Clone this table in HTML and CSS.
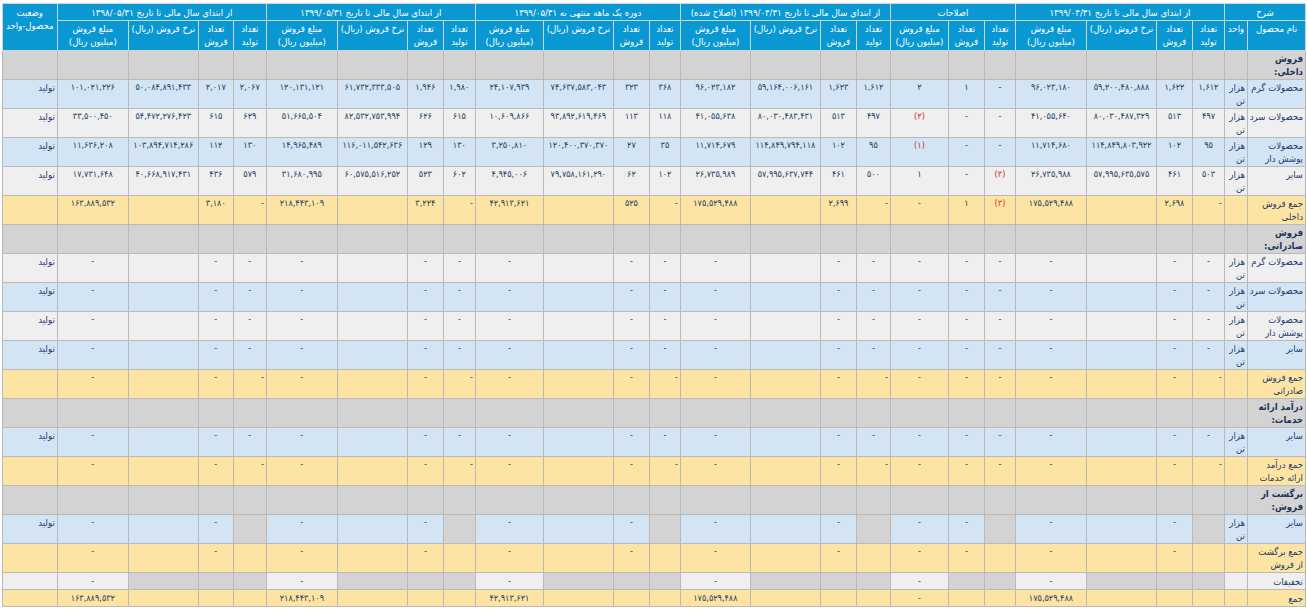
FILE: index.html
```html
<!DOCTYPE html>
<html lang="fa" dir="rtl">
<head>
<meta charset="utf-8">
<title>گزارش فعالیت ماهانه</title>
<link rel="stylesheet" href="styles.css">
</head>
<body>
<table class="rep">
<colgroup>
<col class="w58"><col class="w23">
<col class="w32"><col class="w36"><col class="w70"><col class="w71">
<col class="w31"><col class="w36"><col class="w58">
<col class="w34"><col class="w36"><col class="w70"><col class="w70">
<col class="w31"><col class="w36"><col class="w70"><col class="w68">
<col class="w32"><col class="w36"><col class="w70"><col class="w71">
<col class="w33"><col class="w35"><col class="w70"><col class="w71">
<col class="w55">
</colgroup>
<thead>
<tr class="h1">
<th colspan="2">شرح</th>
<th colspan="4">از ابتدای سال مالی تا تاریخ ۱۳۹۹/۰۴/۳۱</th>
<th colspan="3">اصلاحات</th>
<th colspan="4">از ابتدای سال مالی تا تاریخ ۱۳۹۹/۰۴/۳۱ (اصلاح شده)</th>
<th colspan="4">دوره یک ماهه منتهی به ۱۳۹۹/۰۵/۳۱</th>
<th colspan="4">از ابتدای سال مالی تا تاریخ ۱۳۹۹/۰۵/۳۱</th>
<th colspan="4">از ابتدای سال مالی تا تاریخ ۱۳۹۸/۰۵/۳۱</th>
<th rowspan="2" class="top">وضعیت<br>محصول-واحد</th>
</tr>
<tr class="h2">
<th>نام محصول</th><th>واحد</th>
<th>تعداد<br>تولید</th><th>تعداد<br>فروش</th><th>نرخ فروش (ریال)</th><th>مبلغ فروش<br>(میلیون ریال)</th>
<th>تعداد<br>تولید</th><th>تعداد<br>فروش</th><th>مبلغ فروش<br>(میلیون ریال)</th>
<th>تعداد<br>تولید</th><th>تعداد<br>فروش</th><th>نرخ فروش (ریال)</th><th>مبلغ فروش<br>(میلیون ریال)</th>
<th>تعداد<br>تولید</th><th>تعداد<br>فروش</th><th>نرخ فروش (ریال)</th><th>مبلغ فروش<br>(میلیون ریال)</th>
<th>تعداد<br>تولید</th><th>تعداد<br>فروش</th><th>نرخ فروش (ریال)</th><th>مبلغ فروش<br>(میلیون ریال)</th>
<th>تعداد<br>تولید</th><th>تعداد<br>فروش</th><th>نرخ فروش (ریال)</th><th>مبلغ فروش<br>(میلیون ریال)</th>
</tr>
</thead>
<tbody>
<tr class="sec"><td class="nm">فروش<br>داخلی:</td><td></td><td></td><td></td><td></td><td></td><td></td><td></td><td></td><td></td><td></td><td></td><td></td><td></td><td></td><td></td><td></td><td></td><td></td><td></td><td></td><td></td><td></td><td></td><td></td><td></td></tr>

<tr class="bl"><td class="nm">محصولات گرم</td><td class="un">هزار<br>تن</td>
<td>۱,۶۱۲</td><td>۱,۶۲۲</td><td>۵۹,۲۰۰,۴۸۰,۸۸۸</td><td>۹۶,۰۲۳,۱۸۰</td>
<td>-</td><td>۱</td><td>۲</td>
<td>۱,۶۱۲</td><td>۱,۶۲۳</td><td>۵۹,۱۶۴,۰۰۶,۱۶۱</td><td>۹۶,۰۲۳,۱۸۲</td>
<td>۳۶۸</td><td>۳۲۳</td><td>۷۴,۶۳۷,۵۸۳,۰۴۳</td><td>۲۴,۱۰۷,۹۳۹</td>
<td>۱,۹۸۰</td><td>۱,۹۴۶</td><td>۶۱,۷۳۲,۳۳۳,۵۰۵</td><td>۱۲۰,۱۳۱,۱۲۱</td>
<td>۲,۰۶۷</td><td>۲,۰۱۷</td><td>۵۰,۰۸۴,۸۹۱,۴۳۳</td><td>۱۰۱,۰۲۱,۲۲۶</td>
<td class="st">تولید</td></tr>

<tr class="lt"><td class="nm">محصولات سرد</td><td class="un">هزار<br>تن</td>
<td>۴۹۷</td><td>۵۱۳</td><td>۸۰,۰۳۰,۴۸۷,۳۲۹</td><td>۴۱,۰۵۵,۶۴۰</td>
<td>-</td><td>-</td><td class="neg">(۲)</td>
<td>۴۹۷</td><td>۵۱۳</td><td>۸۰,۰۳۰,۴۸۳,۴۳۱</td><td>۴۱,۰۵۵,۶۳۸</td>
<td>۱۱۸</td><td>۱۱۳</td><td>۹۳,۸۹۲,۶۱۹,۴۶۹</td><td>۱۰,۶۰۹,۸۶۶</td>
<td>۶۱۵</td><td>۶۲۶</td><td>۸۲,۵۳۲,۷۵۳,۹۹۴</td><td>۵۱,۶۶۵,۵۰۴</td>
<td>۶۲۹</td><td>۶۱۵</td><td>۵۴,۴۷۲,۲۷۶,۴۲۳</td><td>۳۳,۵۰۰,۴۵۰</td>
<td class="st">تولید</td></tr>

<tr class="bl"><td class="nm">محصولات<br>پوشش دار</td><td class="un">هزار<br>تن</td>
<td>۹۵</td><td>۱۰۲</td><td>۱۱۴,۸۴۹,۸۰۳,۹۲۲</td><td>۱۱,۷۱۴,۶۸۰</td>
<td>-</td><td>-</td><td class="neg">(۱)</td>
<td>۹۵</td><td>۱۰۲</td><td>۱۱۴,۸۴۹,۷۹۴,۱۱۸</td><td>۱۱,۷۱۴,۶۷۹</td>
<td>۳۵</td><td>۲۷</td><td>۱۲۰,۴۰۰,۳۷۰,۳۷۰</td><td>۳,۲۵۰,۸۱۰</td>
<td>۱۳۰</td><td>۱۲۹</td><td>۱۱۶,۰۱۱,۵۴۲,۶۳۶</td><td>۱۴,۹۶۵,۴۸۹</td>
<td>۱۳۰</td><td>۱۱۲</td><td>۱۰۳,۸۹۴,۷۱۴,۲۸۶</td><td>۱۱,۶۳۶,۲۰۸</td>
<td class="st">تولید</td></tr>

<tr class="lt"><td class="nm">سایر</td><td class="un">هزار<br>تن</td>
<td>۵۰۳</td><td>۴۶۱</td><td>۵۷,۹۹۵,۶۳۵,۵۷۵</td><td>۲۶,۷۳۵,۹۸۸</td>
<td class="neg">(۳)</td><td>-</td><td>۱</td>
<td>۵۰۰</td><td>۴۶۱</td><td>۵۷,۹۹۵,۶۳۷,۷۴۴</td><td>۲۶,۷۳۵,۹۸۹</td>
<td>۱۰۲</td><td>۶۲</td><td>۷۹,۷۵۸,۱۶۱,۲۹۰</td><td>۴,۹۴۵,۰۰۶</td>
<td>۶۰۲</td><td>۵۲۳</td><td>۶۰,۵۷۵,۵۱۶,۲۵۲</td><td>۳۱,۶۸۰,۹۹۵</td>
<td>۵۷۹</td><td>۴۳۶</td><td>۴۰,۶۶۸,۹۱۷,۴۳۱</td><td>۱۷,۷۳۱,۶۴۸</td>
<td class="st">تولید</td></tr>

<tr class="ye"><td class="nm">جمع فروش<br>داخلی</td><td></td>
<td class="ra">-</td><td>۲,۶۹۸</td><td></td><td>۱۷۵,۵۲۹,۴۸۸</td>
<td class="neg">(۳)</td><td>۱</td><td>-</td>
<td class="ra">-</td><td>۲,۶۹۹</td><td></td><td>۱۷۵,۵۲۹,۴۸۸</td>
<td class="ra">-</td><td>۵۲۵</td><td></td><td>۴۲,۹۱۳,۶۲۱</td>
<td class="ra">-</td><td>۳,۲۲۴</td><td></td><td>۲۱۸,۴۴۳,۱۰۹</td>
<td class="ra">-</td><td>۳,۱۸۰</td><td></td><td>۱۶۳,۸۸۹,۵۳۲</td>
<td></td></tr>

<tr class="sec"><td class="nm">فروش<br>صادراتی:</td><td></td><td></td><td></td><td></td><td></td><td></td><td></td><td></td><td></td><td></td><td></td><td></td><td></td><td></td><td></td><td></td><td></td><td></td><td></td><td></td><td></td><td></td><td></td><td></td><td></td></tr>

<tr class="lt"><td class="nm">محصولات گرم</td><td class="un">هزار<br>تن</td>
<td>-</td><td>-</td><td></td><td>-</td><td>-</td><td>-</td><td>-</td>
<td>-</td><td>-</td><td></td><td>-</td><td>-</td><td>-</td><td></td><td>-</td>
<td>-</td><td>-</td><td></td><td>-</td><td>-</td><td>-</td><td></td><td>-</td>
<td class="st">تولید</td></tr>

<tr class="bl"><td class="nm">محصولات سرد</td><td class="un">هزار<br>تن</td>
<td>-</td><td>-</td><td></td><td>-</td><td>-</td><td>-</td><td>-</td>
<td>-</td><td>-</td><td></td><td>-</td><td>-</td><td>-</td><td></td><td>-</td>
<td>-</td><td>-</td><td></td><td>-</td><td>-</td><td>-</td><td></td><td>-</td>
<td class="st">تولید</td></tr>

<tr class="lt"><td class="nm">محصولات<br>پوشش دار</td><td class="un">هزار<br>تن</td>
<td>-</td><td>-</td><td></td><td>-</td><td>-</td><td>-</td><td>-</td>
<td>-</td><td>-</td><td></td><td>-</td><td>-</td><td>-</td><td></td><td>-</td>
<td>-</td><td>-</td><td></td><td>-</td><td>-</td><td>-</td><td></td><td>-</td>
<td class="st">تولید</td></tr>

<tr class="bl"><td class="nm">سایر</td><td class="un">هزار<br>تن</td>
<td>-</td><td>-</td><td></td><td>-</td><td>-</td><td>-</td><td>-</td>
<td>-</td><td>-</td><td></td><td>-</td><td>-</td><td>-</td><td></td><td>-</td>
<td>-</td><td>-</td><td></td><td>-</td><td>-</td><td>-</td><td></td><td>-</td>
<td class="st">تولید</td></tr>

<tr class="ye"><td class="nm">جمع فروش<br>صادراتی</td><td></td>
<td class="ra">-</td><td>-</td><td></td><td>-</td><td>-</td><td>-</td><td>-</td>
<td class="ra">-</td><td>-</td><td></td><td>-</td><td class="ra">-</td><td>-</td><td></td><td>-</td>
<td class="ra">-</td><td>-</td><td></td><td>-</td><td class="ra">-</td><td>-</td><td></td><td>-</td>
<td></td></tr>

<tr class="sec"><td class="nm">درآمد ارائه<br>خدمات:</td><td></td><td></td><td></td><td></td><td></td><td></td><td></td><td></td><td></td><td></td><td></td><td></td><td></td><td></td><td></td><td></td><td></td><td></td><td></td><td></td><td></td><td></td><td></td><td></td><td></td></tr>

<tr class="bl"><td class="nm">سایر</td><td class="un">هزار<br>تن</td>
<td>-</td><td>-</td><td></td><td>-</td><td>-</td><td>-</td><td>-</td>
<td>-</td><td>-</td><td></td><td>-</td><td>-</td><td>-</td><td></td><td>-</td>
<td>-</td><td>-</td><td></td><td>-</td><td>-</td><td>-</td><td></td><td>-</td>
<td class="st">تولید</td></tr>

<tr class="ye"><td class="nm">جمع درآمد<br>ارائه خدمات</td><td></td>
<td class="ra">-</td><td>-</td><td></td><td>-</td><td>-</td><td>-</td><td>-</td>
<td class="ra">-</td><td>-</td><td></td><td>-</td><td class="ra">-</td><td>-</td><td></td><td>-</td>
<td class="ra">-</td><td>-</td><td></td><td>-</td><td class="ra">-</td><td>-</td><td></td><td>-</td>
<td></td></tr>

<tr class="sec"><td class="nm">برگشت از<br>فروش:</td><td></td><td></td><td></td><td></td><td></td><td></td><td></td><td></td><td></td><td></td><td></td><td></td><td></td><td></td><td></td><td></td><td></td><td></td><td></td><td></td><td></td><td></td><td></td><td></td><td></td></tr>

<tr class="bl"><td class="nm">سایر</td><td class="un">هزار<br>تن</td>
<td class="gr"></td><td>-</td><td></td><td>-</td><td class="gr"></td><td>-</td><td>-</td>
<td class="gr"></td><td>-</td><td></td><td>-</td><td class="gr"></td><td>-</td><td></td><td>-</td>
<td class="gr"></td><td>-</td><td></td><td>-</td><td class="gr"></td><td>-</td><td></td><td>-</td>
<td class="st">تولید</td></tr>

<tr class="ye"><td class="nm">جمع برگشت<br>از فروش</td><td></td>
<td></td><td>-</td><td></td><td>-</td><td></td><td>-</td><td>-</td>
<td></td><td>-</td><td></td><td>-</td><td></td><td>-</td><td></td><td>-</td>
<td></td><td>-</td><td></td><td>-</td><td></td><td>-</td><td></td><td>-</td>
<td></td></tr>

<tr class="gy one"><td class="nm li">تخفیفات</td><td class="li"></td>
<td></td><td></td><td></td><td class="li">-</td><td></td><td></td><td class="li">-</td>
<td></td><td></td><td></td><td class="li">-</td><td></td><td></td><td></td><td class="li">-</td>
<td></td><td></td><td></td><td class="li">-</td><td></td><td></td><td></td><td class="li">-</td>
<td class="li"></td></tr>

<tr class="ye one"><td class="nm">جمع</td><td></td>
<td></td><td></td><td></td><td>۱۷۵,۵۲۹,۴۸۸</td><td></td><td></td><td>-</td>
<td></td><td></td><td></td><td>۱۷۵,۵۲۹,۴۸۸</td><td></td><td></td><td></td><td>۴۲,۹۱۳,۶۲۱</td>
<td></td><td></td><td></td><td>۲۱۸,۴۴۳,۱۰۹</td><td></td><td></td><td></td><td>۱۶۳,۸۸۹,۵۳۲</td>
<td></td></tr>
</tbody>
</table>
</body>
</html>
```
FILE: styles.css
```css
html, body {
  margin: 0;
  padding: 0;
  background: #ffffff;
}
body {
  padding: 3px 1px 0 3px;
  font-family: "DejaVu Sans Condensed", "DejaVu Sans", sans-serif;
  font-stretch: condensed;
}
.rep {
  border-collapse: collapse;
  table-layout: fixed;
  width: 1303px;
  font-size: 9px;
  color: #24405e;
}
.w23 { width: 23px; }
.w31 { width: 31px; }
.w32 { width: 32px; }
.w33 { width: 33px; }
.w34 { width: 34px; }
.w35 { width: 35px; }
.w36 { width: 36px; }
.w55 { width: 55px; }
.w58 { width: 58px; }
.w68 { width: 68px; }
.w70 { width: 70px; }
.w71 { width: 71px; }

.rep th {
  background: #0a98d2;
  color: #ffffff;
  font-weight: normal;
  font-size: 9.5px;
  border: 1px solid #c9d6df;
  line-height: 13px;
  padding: 1px 1px;
  text-align: center;
  vertical-align: top;
  white-space: nowrap;
  overflow: hidden;
}
.rep .h1 th {
  padding-top: 2px;
}
.rep .h2 th {
  padding-bottom: 2px;
}
.rep td {
  border: 1px solid #b9b9b9;
  line-height: 13px;
  padding: 1px 2px;
  text-align: center;
  vertical-align: top;
  white-space: nowrap;
  overflow: hidden;
}
.rep .one td {
  padding-top: 2px;
}
.rep td.nm,
.rep td.un,
.rep td.st {
  text-align: right;
  color: #1b3c6e;
  font-size: 9.5px;
}
.rep td.ra {
  text-align: right;
}
.rep td.neg {
  color: #d0302a;
}
.sec td {
  background: #d3d3d3;
}
.rep .sec td.nm {
  font-weight: bold;
  color: #1c3558;
}
.bl td { background: #d3e4f5; }
.lt td { background: #efefef; }
.ye td { background: #fee4a2; }
.gy td { background: #d3d3d3; }
.rep td.gr { background: #d3d3d3; }
.rep td.li { background: #efefef; }
```
